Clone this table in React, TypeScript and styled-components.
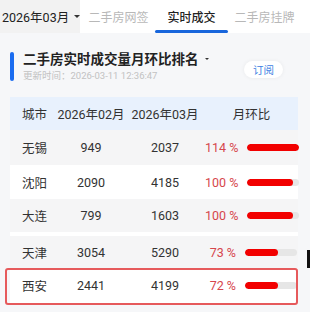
import styled, { createGlobalStyle } from "styled-components";

const GlobalStyle = createGlobalStyle`
  html, body {
    margin: 0;
    padding: 0;
    background: #f6f7f9;
    font-family: Roboto, "Noto Sans CJK SC", sans-serif;
    color: #2a2a2a;
  }
`;

const rows = [
  { city: "无锡", feb: 949, mar: 2037, pct: 114, tone: "gray", h: 35 },
  { city: "沈阳", feb: 2090, mar: 4185, pct: 100, tone: "white", h: 34 },
  { city: "大连", feb: 799, mar: 1603, pct: 100, tone: "gray", h: 33 },
  { city: "天津", feb: 3054, mar: 5290, pct: 73, tone: "split", h: 36 },
  { city: "西安", feb: 2441, mar: 4199, pct: 72, tone: "white", h: 35, mark: true },
];

const maxPct = 114;

const Page = styled.div`
  position: relative;
  width: 310px;
  height: 312px;
  overflow: hidden;
`;

const TabBar = styled.div`
  display: flex;
  height: 33px;
  background: #fff;
`;

const MonthPicker = styled.div`
  display: flex;
  align-items: center;
  gap: 5px;
  width: 80px;
  flex-shrink: 0;
  padding-left: 2px;
  box-sizing: border-box;
  background: #f2f2f2;
  font-size: 12.5px;
  color: #222;
  white-space: nowrap;
`;

const Caret = styled.span<{ $size?: number }>`
  display: inline-block;
  width: 0;
  height: 0;
  border-left: ${({ $size = 3 }) => $size}px solid transparent;
  border-right: ${({ $size = 3 }) => $size}px solid transparent;
  border-top: ${({ $size = 3 }) => $size}px solid #333;
`;

const Tab = styled.div<{ $active?: boolean }>`
  position: relative;
  width: 73px;
  flex-shrink: 0;
  display: flex;
  align-items: center;
  justify-content: center;
  font-size: 12px;
  white-space: nowrap;
  color: ${({ $active }) => ($active ? "#222" : "#b8b8b8")};
  font-weight: ${({ $active }) => ($active ? 500 : 400)};
  &:nth-child(2) {
    margin-left: 2px;
  }
  &::after {
    content: "";
    display: ${({ $active }) => ($active ? "block" : "none")};
    position: absolute;
    left: 0;
    right: 0;
    bottom: 0;
    height: 3px;
    border-radius: 2px;
    background: #1866dc;
  }
`;

const Section = styled.div`
  padding: 0 12px 0 10px;
`;

const Heading = styled.div`
  display: flex;
  align-items: center;
  padding: 17px 0 14px;
`;

const Accent = styled.div`
  width: 4px;
  height: 29px;
  border-radius: 2px;
  background: #1a6cf0;
  margin-right: 9px;
`;

const HeadText = styled.div`
  flex: 1;
  display: flex;
  flex-direction: column;
`;

const Title = styled.div`
  display: flex;
  align-items: center;
  gap: 6px;
  font-size: 13.5px;
  line-height: 18px;
  font-weight: 700;
  color: #222;
`;

const Updated = styled.div`
  font-size: 9.5px;
  line-height: 15px;
  color: #c2c2c2;
`;

const Subscribe = styled.div`
  margin: 6px 15px 0 0;
  width: 39px;
  height: 17px;
  border-radius: 9px;
  background: #fff;
  box-shadow: 0 0 4px rgba(0, 0, 0, 0.06);
  display: flex;
  align-items: center;
  justify-content: center;
  font-size: 10.5px;
  color: #3d7fe3;
`;

const Grid = styled.div<{ $tone: string; $height: number }>`
  position: relative;
  display: grid;
  grid-template-columns: 47px 68px 80px 1fr;
  align-items: center;
  height: ${({ $height }) => $height}px;
  box-sizing: border-box;
  font-size: 12.5px;
  color: #333;
  white-space: nowrap;
  background: ${({ $tone }) =>
    $tone === "head" ? "#e8f1fd" : $tone === "white" ? "#fff" : "#f5f5f6"};
  border-top: ${({ $tone }) => ($tone === "split" ? "4px solid #fff" : "0")};
`;

const HeadCell = styled.div<{ $left?: boolean }>`
  font-size: 12.5px;
  color: #333;
  text-align: ${({ $left }) => ($left ? "left" : "center")};
  padding-left: ${({ $left }) => ($left ? "12px" : "0")};
`;

const City = styled.div`
  padding-left: 12px;
`;

const Num = styled.div`
  text-align: center;
`;

const Ratio = styled.div`
  display: flex;
  align-items: center;
  justify-content: flex-end;
  gap: 9px;
  padding-right: 1px;
`;

const Pct = styled.span`
  flex-shrink: 0;
  color: #d6464c;
`;

const Track = styled.div`
  flex-shrink: 0;
  width: 52px;
  height: 7px;
  border-radius: 4px;
  background: #e6e6e6;
  overflow: hidden;
`;

const Fill = styled.div`
  height: 100%;
  border-radius: 4px;
  background: #f20000;
`;

const Highlight = styled.div`
  position: absolute;
  top: 0;
  bottom: -2px;
  left: -5px;
  right: 0;
  border: 2px solid #e65a5c;
  border-radius: 3px;
  pointer-events: none;
`;

const EdgeMark = styled.div`
  position: absolute;
  left: 307px;
  top: 250px;
  width: 3px;
  height: 18px;
  background: #111;
`;

export default function App() {
  return (
    <Page>
      <GlobalStyle />
      <TabBar>
        <MonthPicker>
          2026年03月
          <Caret />
        </MonthPicker>
        <Tab>二手房网签</Tab>
        <Tab $active>实时成交</Tab>
        <Tab>二手房挂牌</Tab>
      </TabBar>
      <Section>
        <Heading>
          <Accent />
          <HeadText>
            <Title>
              二手房实时成交量月环比排名
              <Caret $size={2.5} />
            </Title>
            <Updated>更新时间：2026-03-11 12:36:47</Updated>
          </HeadText>
          <Subscribe>订阅</Subscribe>
        </Heading>
        <Grid $tone="head" $height={33}>
          <HeadCell $left>城市</HeadCell>
          <HeadCell>2026年02月</HeadCell>
          <HeadCell>2026年03月</HeadCell>
          <HeadCell>月环比</HeadCell>
        </Grid>
        {rows.map((r) => (
          <Grid key={r.city} $tone={r.tone} $height={r.h}>
            <City>{r.city}</City>
            <Num>{r.feb}</Num>
            <Num>{r.mar}</Num>
            <Ratio>
              <Pct>{r.pct} %</Pct>
              <Track>
                <Fill style={{ width: `${(r.pct / maxPct) * 100}%` }} />
              </Track>
            </Ratio>
            {r.mark && <Highlight />}
          </Grid>
        ))}
      </Section>
      <EdgeMark />
    </Page>
  );
}
